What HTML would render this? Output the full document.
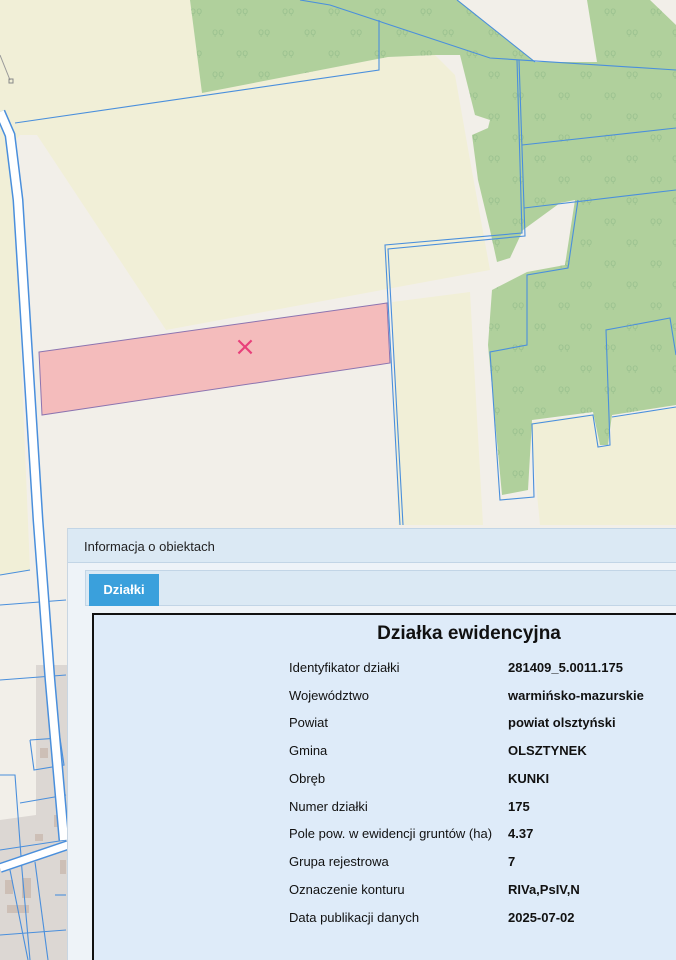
<!DOCTYPE html>
<html><head><meta charset="utf-8"><style>
html,body{margin:0;padding:0;width:676px;height:960px;overflow:hidden;background:#f2efe9;font-family:"Liberation Sans",Arial,sans-serif;position:relative}
#map{position:absolute;left:0;top:0}
#panel{position:absolute;left:67px;top:528px;width:609px;height:432px;background:#eef3f8;border-left:1px solid #c9d6e2;overflow:hidden}
#hdr{position:absolute;left:0;top:0;right:0;height:33px;background:#dbe9f4;border-top:1px solid #c2d5e6;border-bottom:1px solid #c2d5e6;font-size:13px;color:#222;line-height:35px;padding-left:16px}
#tabs{position:absolute;left:17px;top:42px;right:0;height:34px;background:#dbe9f4;border:1px solid #c2d5e6;border-right:none}
#tab{position:absolute;left:3px;top:3px;width:70px;height:32px;background:#3aa0dc;color:#fff;font-weight:bold;font-size:13px;line-height:32px;text-align:center}
#box{position:absolute;left:24px;top:85px;right:0;height:360px;background:#deebf9;border-left:2px solid #111;border-top:2px solid #111}
h1{position:absolute;left:0;width:750px;top:8px;margin:0;text-align:center;font-size:19px;font-weight:bold;color:#111}
.r{position:absolute;font-size:13px;color:#111}
.l{left:195px}.v{left:414px;font-weight:bold}
</style></head><body>
<svg id="map" width="676" height="960" viewBox="0 0 676 960">
<defs><pattern id="tr" width="46" height="42" patternUnits="userSpaceOnUse"><text x="6" y="14" font-size="10" fill="#9cc290" font-family="DejaVu Sans">ϙϙ</text><text x="28" y="35" font-size="10" fill="#9cc290" font-family="DejaVu Sans">ϙϙ</text></pattern></defs>
<rect width="676" height="960" fill="#f2efe9"/>
<polygon points="0,0 190,0 202,93 388,57 435,55 455,75 470,160 490,270 166,330 37,135 20,135 8,150 0,150" fill="#f1efd7"/>
<polygon points="0,150 10,150 20,330 30,570 0,575" fill="#f1efd7"/>
<polygon points="392,302 470,292 483,525 398,525" fill="#f1efd7"/>
<polygon points="530,422 593,414 600,446 610,446 612,417 676,407 676,525 540,525" fill="#f1efd7"/>
<polygon points="190,0 458,0 535,62 597,62 587,0 650,0 676,25 676,405 612,415 608,445 600,445 593,412 532,420 528,490 502,495 488,345 492,290 527,272 565,265 575,200 560,203 523,230 510,258 497,262 490,230 478,180 472,135 488,128 490,120 475,115 460,55 435,55 388,57 202,93" fill="#b0d09c"/>
<polygon points="190,0 458,0 535,62 597,62 587,0 650,0 676,25 676,405 612,415 608,445 600,445 593,412 532,420 528,490 502,495 488,345 492,290 527,272 565,265 575,200 560,203 523,230 510,258 497,262 490,230 478,180 472,135 488,128 490,120 475,115 460,55 435,55 388,57 202,93" fill="url(#tr)"/>
<polygon points="39,352 387,303 390,363 42,415" fill="#f4bcbc" stroke="#8c74b0" stroke-width="1"/>
<text x="245" y="355" font-size="26" fill="#e8407a" text-anchor="middle" font-family="DejaVu Sans">×</text>
<polygon points="36,665 68,665 68,960 0,960 0,820 36,815" fill="#dcd7d3"/>
<g fill="#cdbfb6"><rect x="40" y="748" width="8" height="10"/><rect x="54" y="815" width="6" height="12"/><rect x="35" y="834" width="8" height="7"/><rect x="5" y="880" width="8" height="14"/><rect x="22" y="878" width="9" height="20"/><rect x="7" y="905" width="22" height="8"/><rect x="60" y="860" width="6" height="14"/></g>
<g fill="none" stroke="#4a8fdc" stroke-width="1.1">
<polyline points="15,123 379,70 379,20"/>
<polyline points="300,0 330,5 490,58 676,70"/>
<polyline points="457,0 535,62"/>
<polyline points="517,60 522,233 385,245 400,525"/>
<polyline points="519,60 525,236 388,249 403,525"/>
<polyline points="522,145 676,128"/>
<polyline points="524,208 676,190"/>
<polyline points="578,200 568,268 527,275 527,345 490,352 500,500 534,497 532,424 593,415 598,447 610,445 606,330 670,318 676,355"/>
<polyline points="612,417 676,407"/>
<polyline points="0,575 30,570"/><polyline points="0,605 66,600"/><polyline points="0,680 66,675"/>
<polyline points="30,740 60,738 64,765 34,770 30,740"/>
<polyline points="0,775 15,775 22,870 30,960"/>
<polyline points="20,803 66,795"/>
<polyline points="0,850 66,840"/>
<polyline points="10,870 28,960"/><polyline points="35,862 48,960"/>
<polyline points="55,895 66,895"/><polyline points="0,935 66,930"/>
</g>
<polyline points="0,112 10,135 18,200 28,360 38,520 50,680 64,840" fill="none" stroke="#4a8fdc" stroke-width="11"/>
<polyline points="0,112 10,135 18,200 28,360 38,520 50,680 64,840" fill="none" stroke="#fff" stroke-width="8"/>
<polyline points="0,868 68,845" fill="none" stroke="#4a8fdc" stroke-width="10"/>
<polyline points="0,868 68,845" fill="none" stroke="#fff" stroke-width="7"/>
<polyline points="0,55 10,80" stroke="#999" fill="none"/>
<rect x="9" y="79" width="4" height="4" fill="none" stroke="#888"/>
</svg>
<div id="panel">
<div id="hdr">Informacja o obiektach</div>
<div id="tabs"><div id="tab">Działki</div></div>
<div id="box">
<h1>Działka ewidencyjna</h1>
<div class="r l" style="top:45px">Identyfikator działki</div><div class="r v" style="top:45px">281409_5.0011.175</div>
<div class="r l" style="top:73px">Województwo</div><div class="r v" style="top:73px">warmińsko-mazurskie</div>
<div class="r l" style="top:100px">Powiat</div><div class="r v" style="top:100px">powiat olsztyński</div>
<div class="r l" style="top:128px">Gmina</div><div class="r v" style="top:128px">OLSZTYNEK</div>
<div class="r l" style="top:156px">Obręb</div><div class="r v" style="top:156px">KUNKI</div>
<div class="r l" style="top:184px">Numer działki</div><div class="r v" style="top:184px">175</div>
<div class="r l" style="top:211px">Pole pow. w ewidencji gruntów (ha)</div><div class="r v" style="top:211px">4.37</div>
<div class="r l" style="top:239px">Grupa rejestrowa</div><div class="r v" style="top:239px">7</div>
<div class="r l" style="top:267px">Oznaczenie konturu</div><div class="r v" style="top:267px">RIVa,PsIV,N</div>
<div class="r l" style="top:295px">Data publikacji danych</div><div class="r v" style="top:295px">2025-07-02</div>
</div>
</div>
</body></html>
